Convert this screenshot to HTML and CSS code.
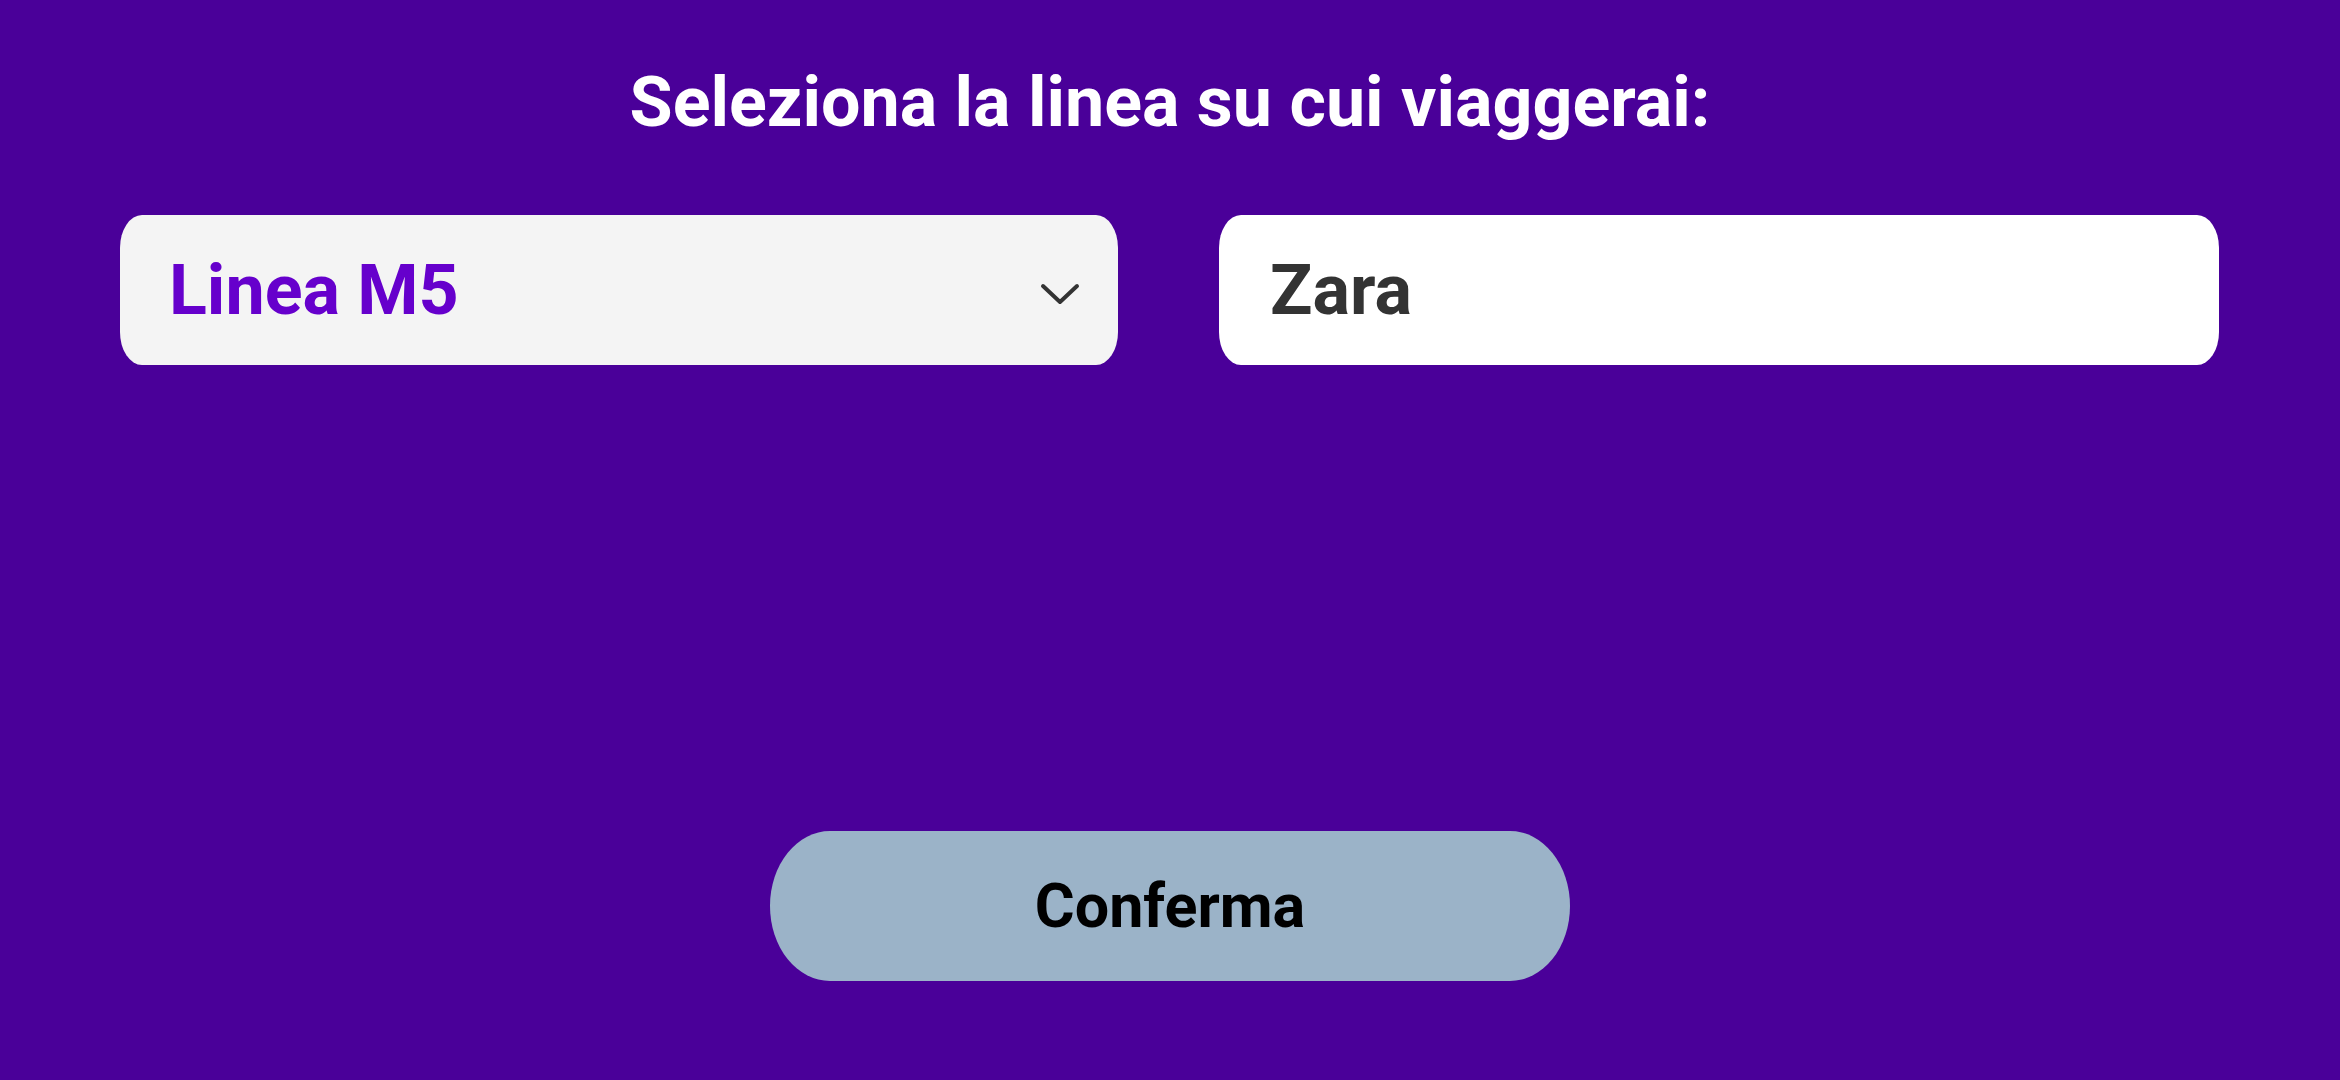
FILE: index.html
```html
<!DOCTYPE html>
<html lang="it">
<head>
<meta charset="utf-8">
<title>Seleziona linea</title>
<link rel="stylesheet" href="styles.css">
</head>
<body>
<main class="screen">
  <h1 class="title">Seleziona la linea su cui viaggerai:</h1>
  <div class="fields">
    <div class="select">
      <span class="select-value">Linea M5</span>
      <svg class="chevron" width="40" height="24" viewBox="0 0 40 24" aria-hidden="true">
        <polyline points="3,4 20,20 37,4" fill="none" stroke="#333" stroke-width="4" stroke-linecap="round" stroke-linejoin="round"/>
      </svg>
    </div>
    <div class="input">
      <span class="input-value">Zara</span>
    </div>
  </div>
  <div class="actions">
    <button class="confirm" type="button">Conferma</button>
  </div>
</main>
</body>
</html>
```

FILE: styles.css
```css
html, body {
  margin: 0;
  padding: 0;
  background: #4a0099;
  height: 100%;
}

.screen {
  display: flex;
  flex-direction: column;
  min-height: 1080px;
  box-sizing: border-box;
  padding-top: 60px;
  font-family: Roboto, "Liberation Sans", sans-serif;
}

.title {
  margin: 0;
  text-align: center;
  color: #ffffff;
  font-size: 70px;
  font-weight: 700;
  line-height: 84px;
}

.fields {
  display: flex;
  gap: 101px;
  padding: 0 121px 0 120px;
  margin-top: 71px;
}

.select,
.input {
  flex: 1;
  height: 150px;
  box-sizing: border-box;
  display: flex;
  align-items: center;
  padding: 0 38px 0 49px;
  border-radius: 22px / 33px;
  font-size: 70px;
  font-weight: 700;
  line-height: 150px;
}

.select {
  background: #f4f4f4;
  justify-content: space-between;
}

.select-value {
  color: #6600cc;
}

.input {
  background: #ffffff;
  padding-left: 51px;
}

.input-value {
  color: #333333;
}

.chevron {
  display: block;
  margin-top: 8px;
}

.actions {
  display: flex;
  justify-content: center;
  margin-top: 466px;
}

.confirm {
  width: 800px;
  height: 150px;
  border: none;
  border-radius: 60px / 75px;
  background: #9bb3c8;
  color: #000000;
  font-family: Roboto, "Liberation Sans", sans-serif;
  font-size: 61px;
  font-weight: 700;
  line-height: 150px;
  padding: 0;
}
```
